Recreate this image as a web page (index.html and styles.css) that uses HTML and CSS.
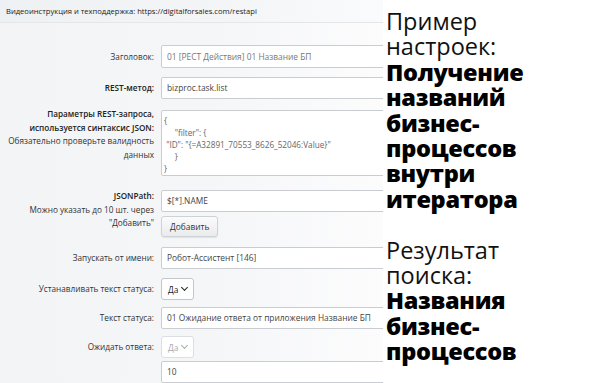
FILE: index.html
```html
<!DOCTYPE html>
<html lang="ru">
<head>
  <meta charset="UTF-8">
  <meta name="viewport" content="width=device-width, initial-scale=1.0">
  <title>Настройки REST-запроса</title>
  <link rel="stylesheet" href="styles.css">
</head>
<body>
  <div class="page">
    <div class="form-panel">
      <div class="topbar">Видеоинструкция и техподдержка: https://digitalforsales.com/restapi</div>

      <div class="form">
        <div class="row row-first">
          <div class="label">Заголовок:</div>
          <div class="field"><div class="input muted">01 [РЕСТ Действия] 01 Название БП</div></div>
        </div>

        <div class="row">
          <div class="label"><b>REST-метод:</b></div>
          <div class="field"><div class="input">bizproc.task.list</div></div>
        </div>

        <div class="row row-top row-params">
          <div class="label label-multi"><b>Параметры REST-запроса,<br>используется синтаксис JSON:</b><br>Обязательно проверьте валидность<br>данных</div>
          <div class="field"><div class="textarea">{
     "filter": {
 "ID": "{=A32891_70553_8626_52046:Value}"
     }
}</div></div>
        </div>

        <div class="row row-top row-path">
          <div class="label label-multi"><b>JSONPath:</b><br>Можно указать до 10 шт. через<br>"Добавить"</div>
          <div class="field">
            <div class="input">$[*].NAME</div>
            <button class="btn">Добавить</button>
          </div>
        </div>

        <div class="row row-user">
          <div class="label">Запускать от имени:</div>
          <div class="field"><div class="input">Робот-Ассистент [146]</div></div>
        </div>

        <div class="row">
          <div class="label">Устанавливать текст статуса:</div>
          <div class="field"><div class="select">Да <span class="chev"></span></div></div>
        </div>

        <div class="row row-tight">
          <div class="label">Текст статуса:</div>
          <div class="field"><div class="input">01 Ожидание ответа от приложения Название БП</div></div>
        </div>

        <div class="row row-tight">
          <div class="label">Ожидать ответа:</div>
          <div class="field"><div class="select disabled">Да <span class="chev"></span></div></div>
        </div>

        <div class="row row-last">
          <div class="label"></div>
          <div class="field"><div class="input">10</div></div>
        </div>
      </div>
    </div>

    <div class="note">
      <div class="line">Пример</div>
      <div class="line">настроек:</div>
      <div class="line strong">Получение</div>
      <div class="line strong">названий</div>
      <div class="line strong">бизнес-</div>
      <div class="line strong">процессов</div>
      <div class="line strong">внутри</div>
      <div class="line strong">итератора</div>
      <div class="line gap">Результат</div>
      <div class="line">поиска:</div>
      <div class="line strong">Названия</div>
      <div class="line strong">бизнес-</div>
      <div class="line strong">процессов</div>
    </div>
  </div>
</body>
</html>
```

FILE: styles.css
```css
html, body {
  margin: 0;
  padding: 0;
  height: 100%;
  overflow: hidden;
  background: #fff;
}
.page {
  display: flex;
  height: 383px;
}

/* left: screenshot of the form */
.form-panel {
  width: 383px;
  flex: none;
  overflow: hidden;
  font-family: "Open Sans", "Noto Sans", sans-serif;
  font-size: 8.2px;
  color: #333;
  background: linear-gradient(to right, #f2f4f6 0%, #f5f6f8 55%, #fcfcfd 100%);
}
.topbar {
  height: 22px;
  line-height: 22px;
  padding-left: 6px;
  font-size: 7.6px;
  color: #222;
  border-bottom: 1px solid #e4e7ea;
  background: linear-gradient(to right, #eef1f3 0%, #f4f5f7 60%, #fafbfc 100%);
}
.form {
  display: flex;
  flex-direction: column;
}
.row {
  display: flex;
  align-items: center;
  gap: 7px;
  margin-top: 9px;
}
.row-first { margin-top: 22px; }
.row-top { align-items: flex-start; }
.row-params { margin-top: 11px; }
.row-path { margin-top: 14px; }
.row-user { margin-top: 10px; }
.row-tight { margin-top: 7px; }
.row-last { margin-top: 3px; }

.label {
  width: 154px;
  flex: none;
  text-align: right;
  line-height: 13.6px;
}
.label b { font-weight: 600; color: #222; }
.label-multi { margin-top: -3px; }
.row-path .label-multi { margin-top: -1px; }

.field {
  flex: 1;
  display: flex;
  flex-direction: column;
  align-items: flex-start;
  gap: 4px;
}
.input {
  width: 260px;
  height: 22px;
  line-height: 20px;
  padding: 0 5px;
  box-sizing: border-box;
  background: #fff;
  border: 1px solid #c9cdd1;
  border-radius: 2px;
  color: #444;
  font-size: 8.4px;
  white-space: nowrap;
}
.input.muted { color: #777; }
.row-first .input { height: 23px; line-height: 21px; }
.textarea {
  width: 260px;
  height: 66px;
  padding: 4px 2px;
  box-sizing: border-box;
  background: #fff;
  border: 1px solid #c9cdd1;
  border-radius: 2px;
  color: #666;
  white-space: pre;
  line-height: 12px;
  font-size: 8.2px;
}
.btn {
  height: 21px;
  padding: 0 8px;
  font: inherit;
  font-size: 8.4px;
  color: #333;
  border: 1px solid #cfd2d5;
  border-radius: 3px;
  background: linear-gradient(#fbfbfc, #e9ebed);
  box-shadow: 0 1px 1px rgba(0, 0, 0, 0.08);
}
.select {
  display: flex;
  align-items: center;
  justify-content: space-between;
  width: 33px;
  height: 22px;
  padding: 0 6px 0 6px;
  box-sizing: border-box;
  background: #fff;
  border: 1px solid #c3c7cb;
  border-radius: 3px;
  color: #222;
  font-size: 8.4px;
}
.chev {
  width: 4px;
  height: 4px;
  border-right: 1.6px solid #222;
  border-bottom: 1.6px solid #222;
  transform: rotate(45deg);
  margin-top: -3px;
}
.select.disabled { color: #aaa; border-color: #dcdfe2; }
.select.disabled .chev { border-color: #aaa; border-width: 1px; }

/* right: caption */
.note {
  flex: 1;
  padding: 9px 0 0 3px;
  font-family: "Open Sans", "Noto Sans", sans-serif;
  font-size: 23.5px;
  color: #111;
  background: #fff;
}
.line {
  height: 25.4px;
  line-height: 25.4px;
  white-space: nowrap;
}
.line.strong {
  font-weight: 800;
  color: #000;
  letter-spacing: -0.3px;
}
.line.gap { margin-top: 25.4px; }
```
